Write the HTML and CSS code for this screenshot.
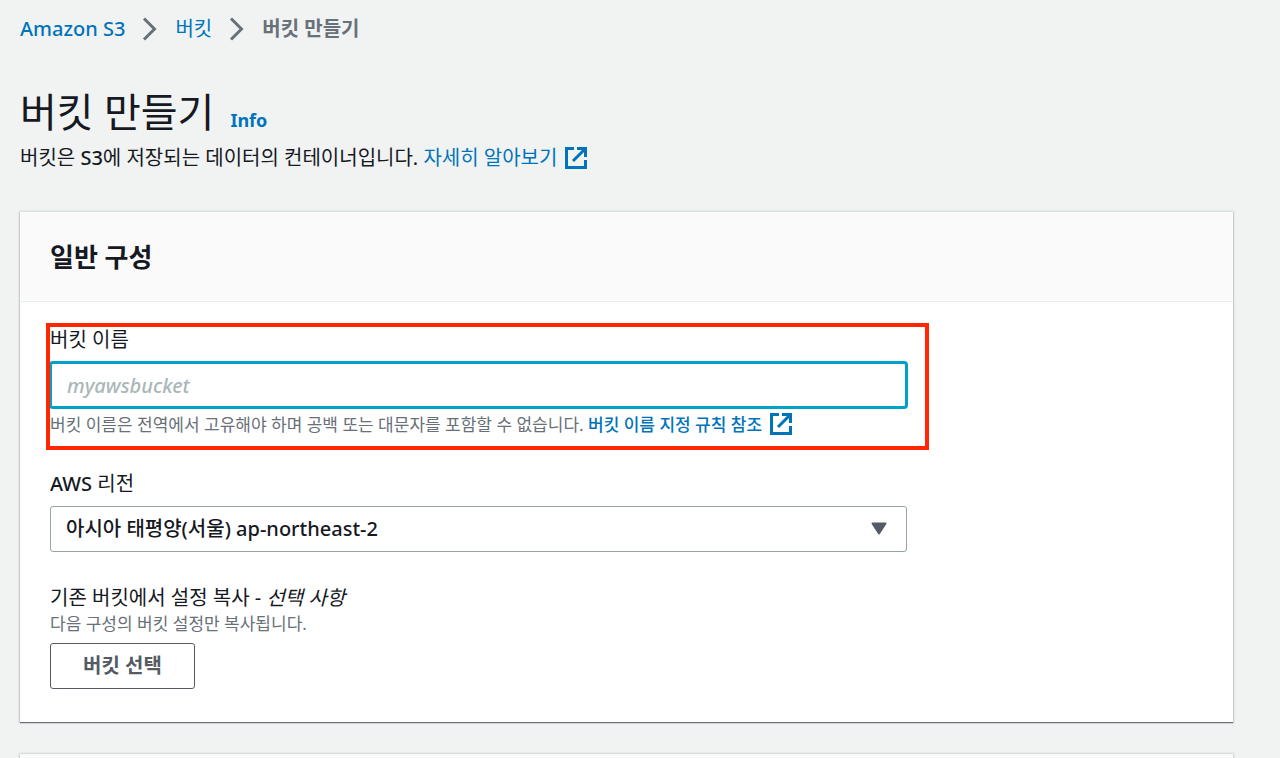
FILE: index.html
```html
<!DOCTYPE html>
<html lang="ko">
    <head>
        <meta charset="utf-8">
        <title>버킷 만들기</title>
        <link rel="stylesheet" href="styles.css">
    </head>
    <body>
        <nav class="breadcrumb">
            <a class="latin" href="#">Amazon S3</a>
            <svg class="chevron" viewBox="0 0 16 24"><path d="M2 1.5 L12.5 12 L2 22.500"/></svg>
            <a href="#">버킷</a>
            <svg class="chevron" viewBox="0 0 16 24"><path d="M2 1.5 L12.5 12 L2 22.500"/></svg>
            <span class="current">버킷 만들기</span>
        </nav>
        <header class="page-header">
            <div class="title">
                <h1>버킷 만들기</h1>
                <a class="info" href="#">Info</a>
            </div>
            <p>버킷은 <span class="latin">S3</span>에 저장되는 데이터의 컨테이너입니다.
                <a href="#">자세히 알아보기<svg class="external" viewBox="0 0 22 22"><path d="M9 1.500H1.500V20.500H20.500V13M12 1.500H20.500V10M20 2L8 14"/></svg></a>
            </p>
        </header>
        <section class="card">
            <h2>일반 구성</h2>
            <form class="card-body">
                <div class="field marked">
                    <label for="bucket_name">버킷 이름</label>
                    <input type="text" id="bucket_name" placeholder="myawsbucket">
                    <p class="hint">버킷 이름은 전역에서 고유해야 하며 공백 또는 대문자를 포함할 수 없습니다.
                        <a href="#">버킷 이름 지정 규칙 참조<svg class="external" viewBox="0 0 22 22"><path d="M9 1.500H1.500V20.500H20.500V13M12 1.500H20.500V10M20 2L8 14"/></svg></a>
                    </p>
                </div>
                <div class="field">
                    <label for="region"><span class="latin">AWS</span> 리전</label>
                    <div class="select">
                        <select id="region">
                            <option>아시아 태평양(서울) ap-northeast-2</option>
                        </select>
                        <svg class="arrow" viewBox="0 0 16 13"><path d="M1.500 1.500H14.500L8 11.500Z"/></svg>
                    </div>
                </div>
                <div class="field">
                    <label for="choose">기존 버킷에서 설정 복사 - <em>선택 사항</em></label>
                    <p class="hint">다음 구성의 버킷 설정만 복사됩니다.</p>
                    <button type="button" id="choose">버킷 선택</button>
                </div>
            </form>
        </section>
        <section class="card next"></section>
    </body>
</html>
```

FILE: styles.css
```css
* {
    box-sizing: border-box;
}
body {
    display: flex;
    flex-direction: column;
    min-height: 100vh;
    margin: 0;
    padding: 14px 47px 0 20px;
    background: #f1f3f3;
    color: #16191f;
    font-family: "Noto Sans", "Noto Sans CJK KR", sans-serif;
    font-size: 20px;
    line-height: 30px;
}
h1, h2, p {
    margin: 0;
}
a {
    color: #0073bb;
    text-decoration: none;
}
.latin {
    font-weight: 500;
}

.breadcrumb {
    display: flex;
    align-items: center;
    gap: 17px;
}
.breadcrumb .current {
    color: #687078;
    font-weight: bold;
}
.chevron {
    width: 16px;
    height: 24px;
    fill: none;
    stroke: #687078;
    stroke-width: 3;
}

.page-header {
    margin: 40px 0 39px;
}
.title {
    display: flex;
    align-items: baseline;
    gap: 16px;
    margin-bottom: 3px;
}
h1 {
    font-size: 40px;
    font-weight: normal;
    line-height: 56px;
}
.info {
    font-size: 18px;
    font-weight: bold;
}
.external {
    width: 22px;
    height: 22px;
    margin-left: 8px;
    vertical-align: -4px;
    fill: none;
    stroke: currentColor;
    stroke-width: 3;
}

.card {
    background: #fff;
    box-shadow: 0 1px 1px #687078, 0 0 2px 1px #d0d6d6;
}
.card h2 {
    padding: 27px 30px 26px;
    background: #fafafa;
    border-bottom: 1px solid #eaeded;
    font-size: 26px;
    line-height: 36px;
}
.card-body {
    display: flex;
    flex-direction: column;
    gap: 32px;
    padding: 24px 30px 33px;
}
.card.next {
    flex: 1;
    margin-top: 32px;
    background: #fafafa;
}

.field {
    position: relative;
    max-width: 857px;
}
/* red frame drawn over the bucket name field */
.marked::after {
    content: "";
    position: absolute;
    inset: -3px -22px -12px -4px;
    border: 4px solid #ff2600;
    pointer-events: none;
}
.field label {
    display: block;
    margin-bottom: 8px;
    line-height: 28px;
}
.hint {
    color: #687078;
    font-size: 17px;
    line-height: 24px;
}
.hint a {
    font-weight: 500;
}
input, select, button {
    display: block;
    height: 46px;
    border: 1px solid #95a5a6;
    border-radius: 3px;
    background: #fff;
    color: #16191f;
    font: inherit;
}
input, select {
    width: 100%;
    padding: 0 15px;
    font-weight: 500;
}
input {
    border: 2px solid #00a1c9;
    box-shadow: 0 0 0 1px #00a1c9;
}
input::placeholder {
    color: #aab7b8;
    font-style: italic;
    opacity: 1;
}
input + .hint {
    margin-top: 6px;
}
.marked .hint {
    margin-top: 4px;
    line-height: 26px;
}
.select {
    position: relative;
}
select {
    appearance: none;
}
.arrow {
    position: absolute;
    top: 16px;
    right: 20px;
    width: 16px;
    height: 13px;
    fill: #545b64;
    stroke: #545b64;
    stroke-width: 2;
    stroke-linejoin: round;
    pointer-events: none;
}
.field label:has(em) {
    margin-bottom: 0;
}
button {
    margin-top: 7px;
    padding: 0 32px;
    border-color: #545b64;
    color: #545b64;
    font-weight: bold;
}
```
